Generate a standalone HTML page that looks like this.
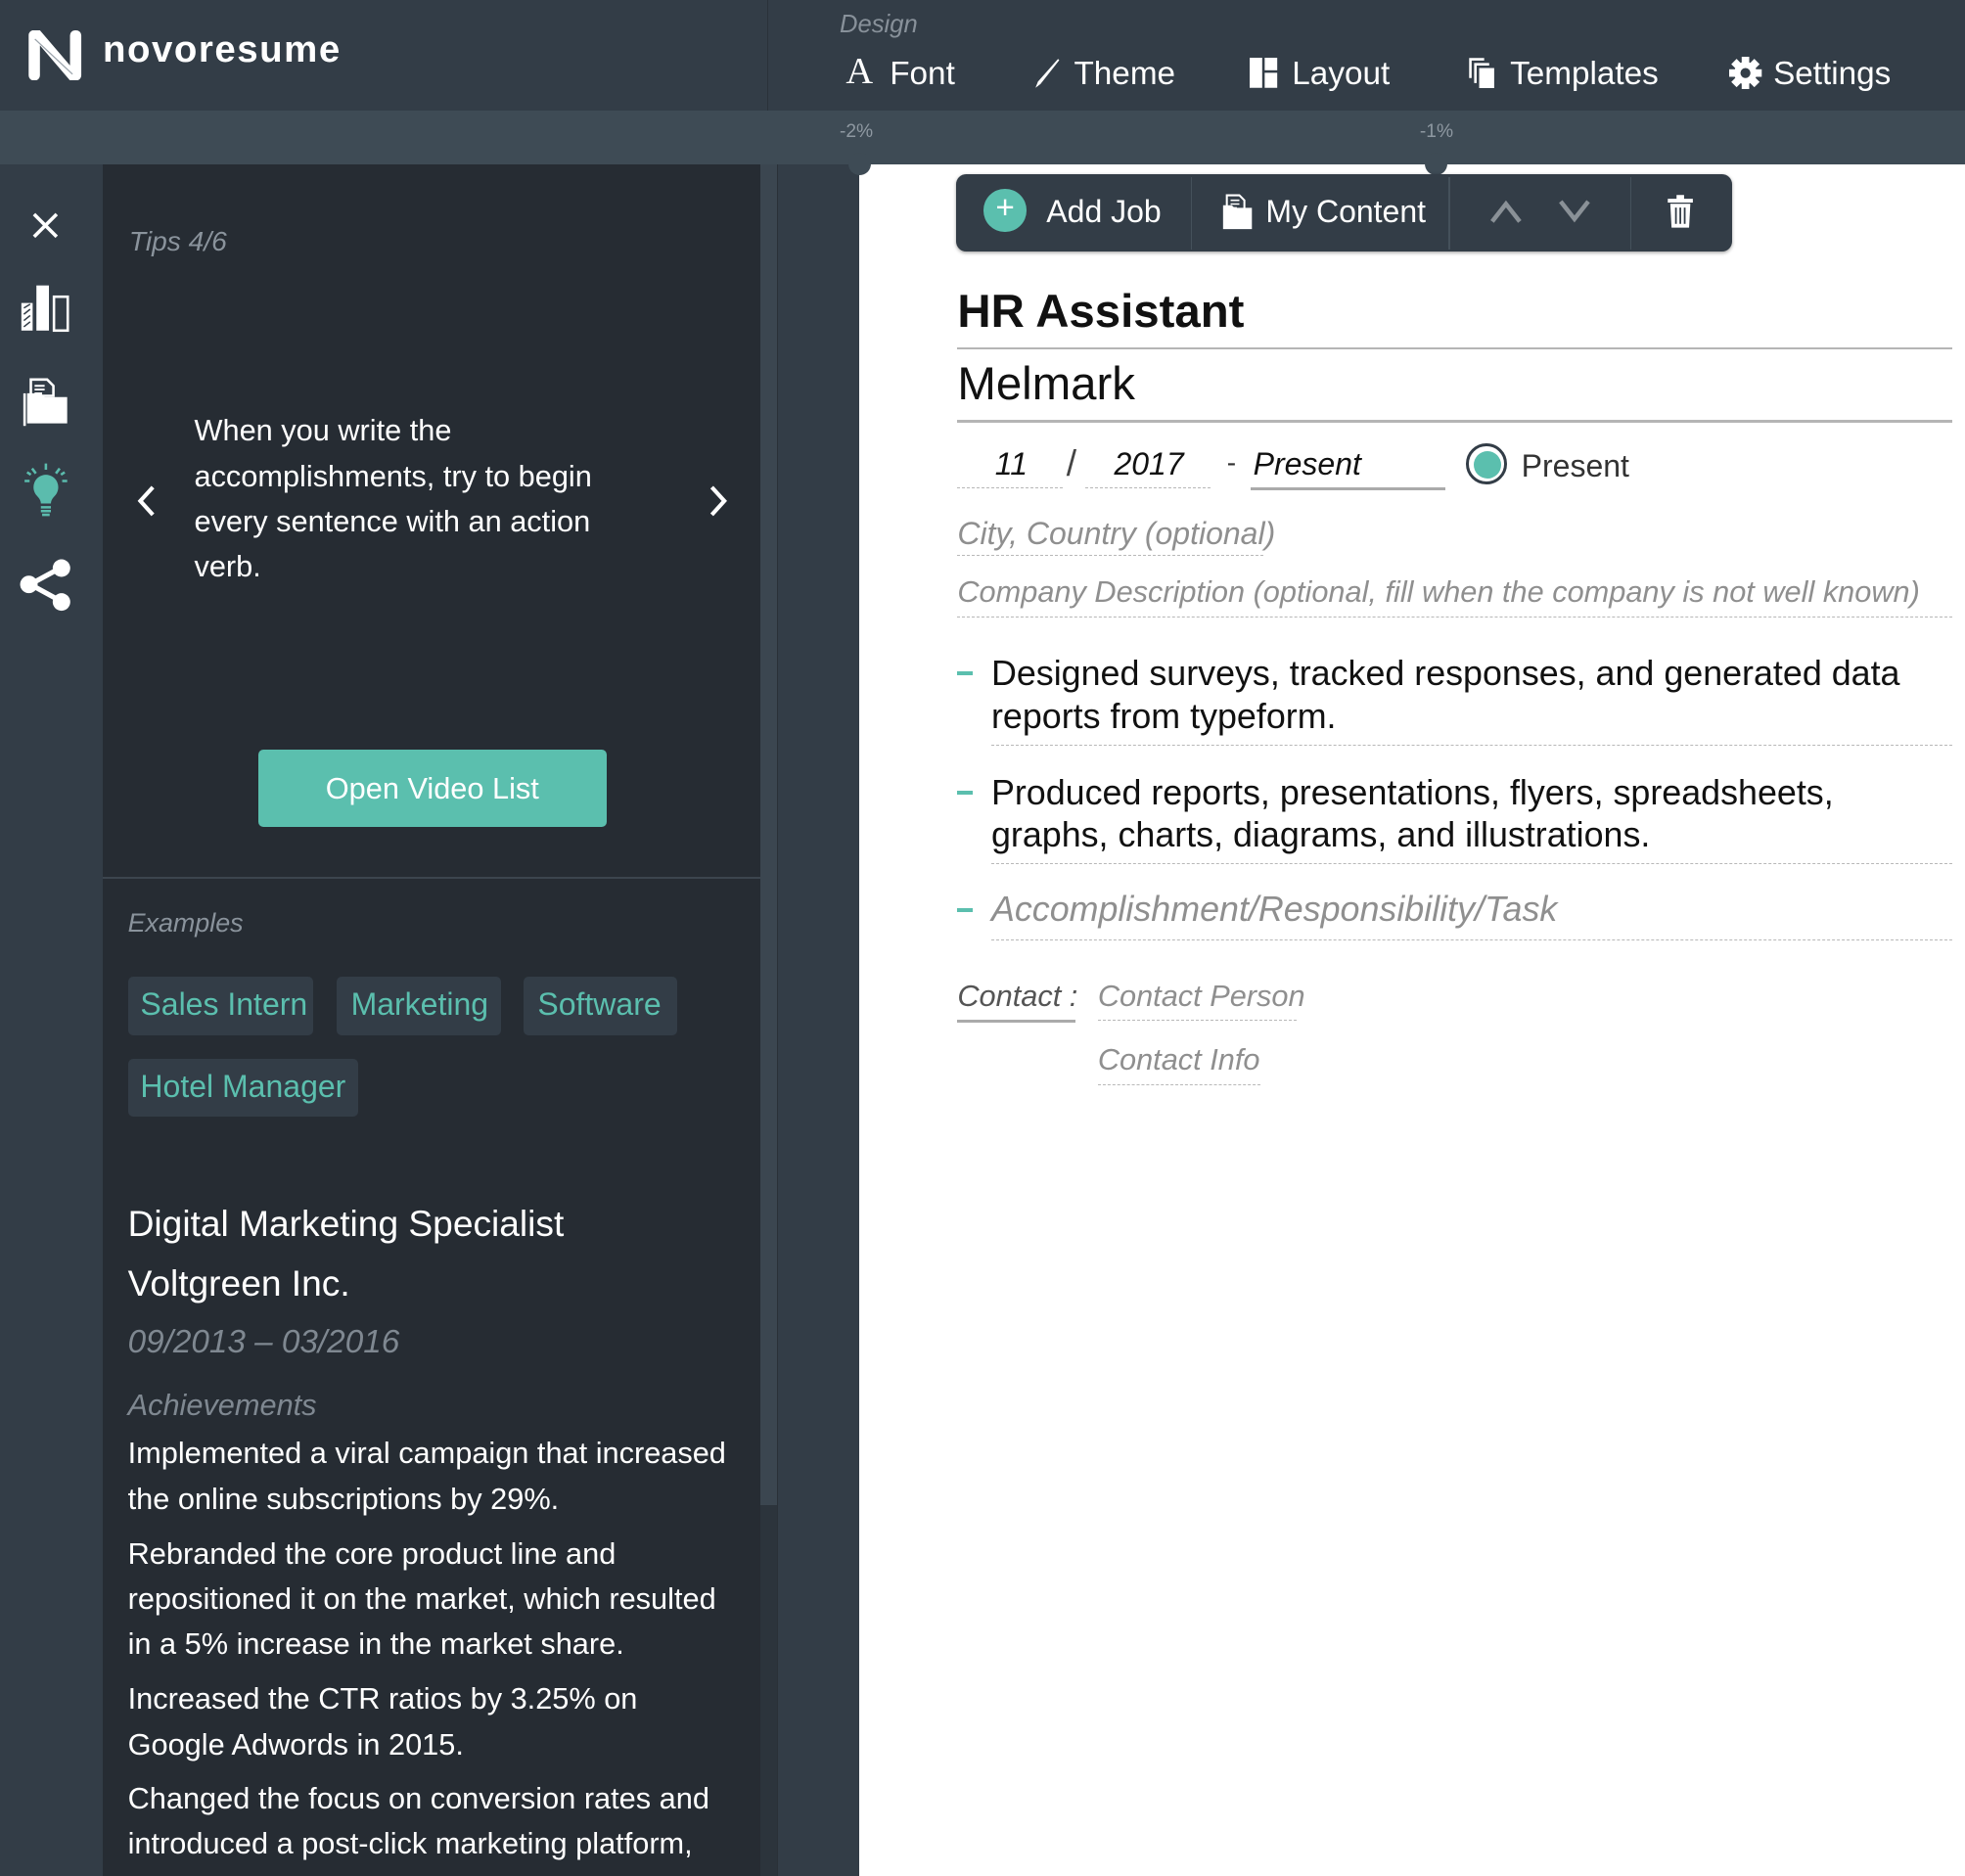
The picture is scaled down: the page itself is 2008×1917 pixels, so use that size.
<!DOCTYPE html>
<html><head><meta charset="utf-8">
<style>
html,body{margin:0;padding:0;}
html{width:2008px;height:1916px;overflow:hidden;background:#333d47;}
body{zoom:1.28061;width:1568px;height:1497px;position:relative;overflow:hidden;background:#333d47;font-family:"Liberation Sans",Arial,sans-serif;}
.a{position:absolute;}
.t{position:absolute;white-space:nowrap;line-height:1;}
.i{font-style:italic;}
.w{color:#fff;}
.g{color:#8f8f8f;}
.dot{border-bottom:1.5px dashed #b8b8b8;}
</style></head><body>
<!-- header -->
<div class="a" style="left:0;top:0;width:1568px;height:88px;background:#333d47"></div>
<div class="a" style="left:612px;top:0;width:1px;height:88px;background:#2a323a"></div>
<svg class="a" style="left:22px;top:24px" width="46" height="40" viewBox="0 0 46 40">
<path d="M4 0h6l24 28V4a4 4 0 0 1 4-4h1a4 4 0 0 1 4 4v32a4 4 0 0 1-4 4h-5L10 12v24a4 4 0 0 1-4 4H5a4 4 0 0 1-4-4V4a4 4 0 0 1 3-4z" fill="#fff"/>
<path d="M6 7l30 28" stroke="#9aa3ab" stroke-width="1"/></svg>
<div class="t w" style="left:82px;top:25px;font-size:30px;font-weight:bold;letter-spacing:1.2px">novoresume</div>
<div class="t i" style="left:670px;top:10px;font-size:20px;color:#88919a">Design</div>
<div class="t" style="left:675px;top:42px;font-size:30px;color:#fff;font-family:'Liberation Serif',serif">A</div>
<div class="t w" style="left:710px;top:46px;font-size:26px">Font</div>
<svg class="a" style="left:822px;top:46px" width="24" height="26" viewBox="0 0 24 26"><path d="M22 1L6 19l-2 5 4-3L23 2z" fill="#fff"/></svg>
<div class="t w" style="left:857px;top:46px;font-size:26px">Theme</div>
<svg class="a" style="left:997px;top:46px" width="24" height="24" viewBox="0 0 24 24"><rect x="0" y="0" width="10" height="24" fill="#fff"/><rect x="12" y="0" width="10" height="10" fill="#fff"/><rect x="12" y="12" width="10" height="12" fill="#fff"/></svg>
<div class="t w" style="left:1031px;top:46px;font-size:26px">Layout</div>
<svg class="a" style="left:1171px;top:45px" width="24" height="26" viewBox="0 0 24 26"><path d="M1 1h12v2H3v14H1z M5 5h12v2H7v14H5z" fill="#fff"/><rect x="9" y="9" width="12" height="16" fill="#fff"/></svg>
<div class="t w" style="left:1205px;top:46px;font-size:26px">Templates</div>
<svg class="a" style="left:1380px;top:45px" width="26" height="26" viewBox="0 0 26 26"><g fill="#fff"><circle cx="13" cy="13" r="9"/><rect x="10" y="0" width="6" height="26"/><rect x="0" y="10" width="26" height="6"/><rect x="10" y="0" width="6" height="26" transform="rotate(45 13 13)"/><rect x="10" y="0" width="6" height="26" transform="rotate(-45 13 13)"/></g><circle cx="13" cy="13" r="4" fill="#333d47"/></svg>
<div class="t w" style="left:1415px;top:46px;font-size:26px">Settings</div>
<!-- ruler bar -->
<div class="a" style="left:0;top:88px;width:1568px;height:43px;background:#3e4b55"></div>
<div class="t" style="left:670px;top:98px;font-size:15px;color:#8e98a1">-2%</div>
<div class="t" style="left:1133px;top:98px;font-size:15px;color:#8e98a1">-1%</div>
<!-- left icon column -->
<div class="a" style="left:0;top:131px;width:82px;height:1366px;background:#333d47"></div>
<svg class="a" style="left:24px;top:168px" width="24" height="24" viewBox="0 0 24 24"><path d="M3 3l18 18M21 3L3 21" stroke="#fff" stroke-width="2.8"/></svg>
<svg class="a" style="left:14px;top:222px" width="44" height="46" viewBox="0 0 44 46"><rect x="3" y="20" width="9" height="22" fill="#fff"/><path d="M5 24l5-3M5 29l5-4M5 34l5-4M5 39l5-4" stroke="#333d47" stroke-width="1.2"/><rect x="15" y="6" width="10" height="36" fill="#fff"/><rect x="29" y="15" width="11" height="27" fill="none" stroke="#fff" stroke-width="2"/></svg>
<svg class="a" style="left:16px;top:300px" width="42" height="42" viewBox="0 0 42 42"><path d="M9 3h13l5 5v8H9z" fill="none" stroke="#fff" stroke-width="2"/><path d="M12 8h8M12 11h8M12 14h6" stroke="#fff" stroke-width="1.5"/><path d="M6 14v24h32V17H20l-3-3z" fill="#fff"/><path d="M4 14v26" stroke="#fff" stroke-width="2"/></svg>
<svg class="a" style="left:16px;top:368px" width="42" height="46" viewBox="0 0 42 46"><g stroke="#5bbcad" stroke-width="2"><path d="M21 2v5M10 6l3 4M32 6l-3 4M4 16h4M34 16h4M6 9l3 2M36 9l-3 2"/></g><path d="M21 11a10 10 0 0 0-7 17c2 2 3 4 3 6h8c0-2 1-4 3-6a10 10 0 0 0-7-17z" fill="#5bbcad"/><path d="M17 37h8M17 40h8M18 43h6" stroke="#5bbcad" stroke-width="2"/></svg>
<svg class="a" style="left:14px;top:444px" width="46" height="46" viewBox="0 0 46 46"><path d="M10 22L34 9M10 22l24 13" stroke="#fff" stroke-width="4"/><circle cx="9" cy="22" r="7" fill="#fff"/><circle cx="35" cy="9" r="7" fill="#fff"/><circle cx="35" cy="36" r="7" fill="#fff"/></svg>
<!-- tips panel -->
<div class="a" style="left:82px;top:131px;width:525px;height:1366px;background:#262c33"></div>
<div class="a" style="left:607px;top:131px;width:14px;height:1070px;background:#3b4650"></div>
<div class="a" style="left:607px;top:1201px;width:14px;height:296px;background:#2c343c"></div>
<div class="a" style="left:620px;top:131px;width:1px;height:1366px;background:#2a3138"></div>
<div class="a" style="left:621px;top:131px;width:65px;height:1366px;background:#333d47"></div>
<div class="t i" style="left:103px;top:181px;font-size:22px;color:#8a939c">Tips 4/6</div>
<svg class="a" style="left:107px;top:386px" width="20" height="28" viewBox="0 0 20 28"><path d="M15 3L5 14l10 11" fill="none" stroke="#fff" stroke-width="3.2"/></svg>
<svg class="a" style="left:563px;top:386px" width="20" height="28" viewBox="0 0 20 28"><path d="M5 3l10 11L5 25" fill="none" stroke="#fff" stroke-width="3.2"/></svg>
<div class="a w" style="left:155px;top:326px;font-size:24px;line-height:36px;white-space:nowrap">When you write the<br>accomplishments, try to begin<br>every sentence with an action<br>verb.</div>
<div class="a" style="left:206px;top:598px;width:278px;height:62px;background:#5bbfae;border-radius:4px;color:#fff;font-size:24px;line-height:62px;text-align:center">Open Video List</div>
<div class="a" style="left:82px;top:700px;width:525px;height:1px;background:#3c454e"></div>
<div class="t i" style="left:102px;top:726px;font-size:21px;color:#8a939c">Examples</div>
<div class="a" style="left:102px;top:779px;width:148px;height:47px;background:#333d47;border-radius:4px"></div>
<div class="a" style="left:269px;top:779px;width:131px;height:47px;background:#333d47;border-radius:4px"></div>
<div class="a" style="left:418px;top:779px;width:122px;height:47px;background:#333d47;border-radius:4px"></div>
<div class="a" style="left:102px;top:845px;width:184px;height:46px;background:#333d47;border-radius:4px"></div>
<div class="t" style="left:112px;top:789px;font-size:25px;color:#5bbfae">Sales Intern</div>
<div class="t" style="left:280px;top:789px;font-size:25px;color:#5bbfae">Marketing</div>
<div class="t" style="left:429px;top:789px;font-size:25px;color:#5bbfae">Software</div>
<div class="t" style="left:112px;top:854px;font-size:25px;color:#5bbfae">Hotel Manager</div>
<div class="t w" style="left:102px;top:962px;font-size:29px">Digital Marketing Specialist</div>
<div class="t w" style="left:102px;top:1010px;font-size:29px">Voltgreen Inc.</div>
<div class="t i" style="left:102px;top:1058px;font-size:26px;color:#7f8891">09/2013 – 03/2016</div>
<div class="t i" style="left:102px;top:1110px;font-size:24px;color:#7f8891">Achievements</div>
<div class="a w" style="left:102px;top:1142px;font-size:24px;line-height:36px;white-space:nowrap">Implemented a viral campaign that increased<br>the online subscriptions by 29%.</div>
<div class="a w" style="left:102px;top:1222px;font-size:24px;line-height:36px;white-space:nowrap">Rebranded the core product line and<br>repositioned it on the market, which resulted<br>in a 5% increase in the market share.</div>
<div class="a w" style="left:102px;top:1338px;font-size:24px;line-height:36px;white-space:nowrap">Increased the CTR ratios by 3.25% on<br>Google Adwords in 2015.</div>
<div class="a w" style="left:102px;top:1417px;font-size:24px;line-height:36px;white-space:nowrap">Changed the focus on conversion rates and<br>introduced a post-click marketing platform,</div>
<!-- page -->
<div class="a" style="left:686px;top:131px;width:882px;height:1366px;background:#fff"></div>
<div class="a" style="left:677px;top:122px;width:18px;height:18px;border-radius:50%;background:#3e4b55"></div>
<div class="a" style="left:1137px;top:122px;width:18px;height:18px;border-radius:50%;background:#3e4b55"></div>
<!-- toolbar -->
<div class="a" style="left:763px;top:139px;width:619px;height:62px;background:#333d47;border-radius:8px;box-shadow:0 1px 3px rgba(0,0,0,.35)"></div>
<div class="a" style="left:950px;top:141px;width:1px;height:58px;background:#45515b"></div>
<div class="a" style="left:1156px;top:141px;width:1px;height:58px;background:#45515b"></div>
<div class="a" style="left:1301px;top:141px;width:1px;height:58px;background:#45515b"></div>
<div class="a" style="left:785px;top:151px;width:34px;height:34px;border-radius:50%;background:#5bbfae;color:#fff;font-size:26px;line-height:32px;text-align:center">+</div>
<div class="t w" style="left:835px;top:156px;font-size:25px">Add Job</div>
<svg class="a" style="left:973px;top:154px" width="28" height="30" viewBox="0 0 28 30"><path d="M6 2h10l4 4v8H6z" fill="none" stroke="#fff" stroke-width="1.6"/><path d="M9 6h7M9 9h7M9 12h5" stroke="#fff" stroke-width="1.2"/><path d="M3 10v19h23V12H12l-2-2z" fill="#fff"/></svg>
<div class="t w" style="left:1010px;top:156px;font-size:25px">My Content</div>
<svg class="a" style="left:1188px;top:158px" width="28" height="22" viewBox="0 0 28 22"><path d="M3 19L14 5l11 14" fill="none" stroke="#8a9197" stroke-width="3.5"/></svg>
<svg class="a" style="left:1242px;top:158px" width="28" height="22" viewBox="0 0 28 22"><path d="M3 3l11 14 11-14" fill="none" stroke="#8a9197" stroke-width="3.5"/></svg>
<svg class="a" style="left:1330px;top:155px" width="22" height="28" viewBox="0 0 22 28"><path d="M8 1h6v3h7v3H1V4h7z" fill="#fff"/><path d="M3 8h16l-1 19H4z" fill="#fff"/><path d="M7.5 11v13M11 11v13M14.5 11v13" stroke="#333d47" stroke-width="1.4"/></svg>
<!-- resume content -->
<div class="t" style="left:764px;top:230px;font-size:37px;font-weight:bold;color:#111">HR Assistant</div>
<div class="a" style="left:764px;top:277px;width:794px;height:2px;background:#b5b5b5"></div>
<div class="t" style="left:764px;top:288px;font-size:37px;color:#111">Melmark</div>
<div class="a" style="left:764px;top:335px;width:794px;height:2px;background:#b5b5b5"></div>
<div class="t i" style="left:794px;top:358px;font-size:25px;color:#111">11</div>
<div class="a dot" style="left:764px;top:389px;width:84px"></div>
<div class="t" style="left:851px;top:355px;font-size:29px;color:#444;font-weight:300">/</div>
<div class="t i" style="left:889px;top:358px;font-size:25px;color:#111">2017</div>
<div class="a dot" style="left:866px;top:389px;width:100px"></div>
<div class="t" style="left:979px;top:358px;font-size:22px;color:#333">-</div>
<div class="t i" style="left:1000px;top:358px;font-size:25px;color:#111">Present</div>
<div class="a" style="left:998px;top:389px;width:155px;height:2px;background:#aaa"></div>
<div class="a" style="left:1170px;top:354px;width:28px;height:28px;border:3px solid #333d47;border-radius:50%;background:#fff"></div>
<div class="a" style="left:1176px;top:360px;width:22px;height:22px;border-radius:50%;background:#5bbfae"></div>
<div class="t" style="left:1214px;top:359px;font-size:25px;color:#333">Present</div>
<div class="t i g" style="left:764px;top:413px;font-size:25px">City, Country (optional)</div>
<div class="a dot" style="left:764px;top:443px;width:244px"></div>
<div class="t i g" style="left:764px;top:461px;font-size:24px">Company Description (optional, fill when the company is not well known)</div>
<div class="a dot" style="left:764px;top:492px;width:794px"></div>
<div class="a" style="left:764px;top:536px;width:12px;height:3px;background:#5bbfae"></div>
<div class="a" style="left:791px;top:521px;font-size:28px;line-height:34px;color:#111;white-space:nowrap">Designed surveys, tracked responses, and generated data<br>reports from typeform.</div>
<div class="a dot" style="left:791px;top:594px;width:767px"></div>
<div class="a" style="left:764px;top:631px;width:12px;height:3px;background:#5bbfae"></div>
<div class="a" style="left:791px;top:616px;font-size:28px;line-height:34px;color:#111;white-space:nowrap">Produced reports, presentations, flyers, spreadsheets,<br>graphs, charts, diagrams, and illustrations.</div>
<div class="a dot" style="left:791px;top:689px;width:767px"></div>
<div class="a" style="left:764px;top:725px;width:12px;height:3px;background:#5bbfae"></div>
<div class="t i g" style="left:791px;top:712px;font-size:28px">Accomplishment/Responsibility/Task</div>
<div class="a dot" style="left:791px;top:750px;width:767px"></div>
<div class="t i" style="left:764px;top:783px;font-size:24px;color:#555">Contact :</div>
<div class="a" style="left:764px;top:814px;width:94px;height:2px;background:#aaa"></div>
<div class="t i g" style="left:876px;top:783px;font-size:24px">Contact Person</div>
<div class="a dot" style="left:876px;top:814px;width:159px"></div>
<div class="t i g" style="left:876px;top:834px;font-size:24px">Contact Info</div>
<div class="a dot" style="left:876px;top:865px;width:130px"></div>
</body></html>
